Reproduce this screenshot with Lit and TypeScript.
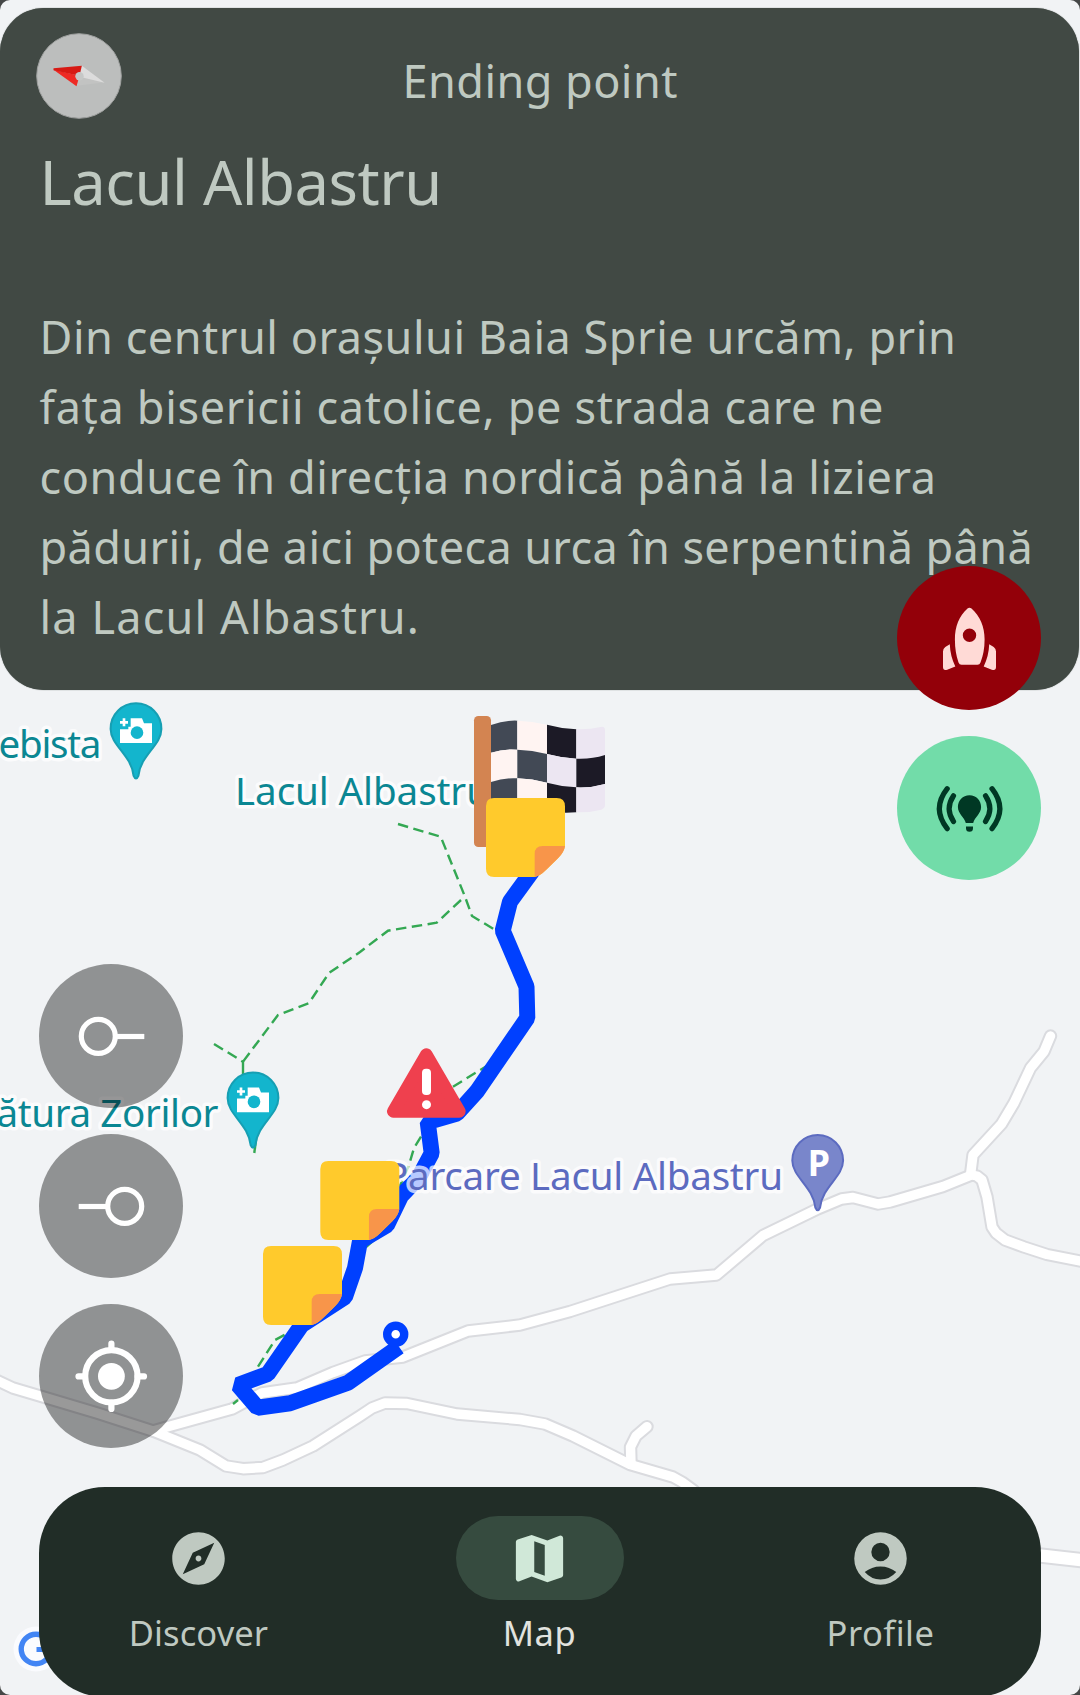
import { LitElement, html, svg, css } from "lit";
import { customElement } from "lit/decorators.js";

type Point = [number, number];
const line = (pts: Point[]) => "M" + pts.map((p) => p.join(" ")).join("L");

const ROADS: Point[][] = [
  [[153, 1431], [167, 1427], [232, 1409], [262, 1393], [297, 1388], [333, 1372.5], [365, 1361], [403, 1357], [468, 1331], [520, 1325], [570, 1311.5], [670, 1279], [716.5, 1275], [763, 1235.5], [817.5, 1209], [841.5, 1199], [853, 1197.5], [878, 1204], [890, 1202], [943, 1186.5], [971.5, 1175], [977, 1176], [982, 1180], [987, 1197], [992, 1227], [996, 1233], [1005, 1240], [1024, 1247], [1047, 1254.5], [1090, 1263]],
  [[-6, 1379], [13, 1388], [40, 1396], [97, 1413], [153, 1431], [200, 1450], [226, 1466], [243, 1468.7], [263, 1467.5], [283, 1460], [313, 1446], [360, 1416], [372, 1408], [385, 1403], [407, 1403.5], [457, 1414], [520, 1419.5], [545, 1424], [573, 1436], [630, 1464.5], [673, 1477], [682, 1482], [693, 1490], [708, 1504]],
  [[1050.5, 1036], [1044, 1051.5], [1030.5, 1068], [1014, 1103], [1001.5, 1124], [973, 1155], [970.5, 1175]],
  [[647, 1426.7], [636, 1436], [630.5, 1447], [631, 1464]],
];

const TRAILS: Point[][] = [
  [[398, 824], [440.7, 836.7], [465, 896.7], [472, 916], [497, 931]],
  [[461, 900], [436.7, 922.7], [388, 930.7], [360, 952], [329, 973], [309, 1003], [278, 1015], [243, 1061.7]],
  [[214, 1044], [243, 1061.7]],
  [[453, 1086.7], [490, 1064]],
  [[421, 1136.7], [414, 1148], [409, 1165], [400, 1186]],
  [[258, 1366.7], [275, 1340], [288, 1333]],
  [[233, 1404], [238, 1400]],
  [[366, 1247], [374, 1240]],
];

const STUBS: Point[][] = [
  [[243, 1061], [243, 1077]],
  [[257, 1132], [254.3, 1153]],
];

const ROUTE: Point[] = [
  [536, 866], [510, 901.7], [502.7, 930.7], [526.5, 986.7], [527.3, 1018], [476.7, 1091.7], [457, 1113.5], [427.7, 1122], [431.7, 1153.3], [419, 1177], [401, 1196], [387, 1225], [360, 1241], [355, 1268], [345, 1297], [301.7, 1325], [267.7, 1374], [238, 1385], [257.5, 1407.7], [290, 1403.3], [348, 1382.7], [399, 1346.7],
];

const photoPin = (x: number, y: number) => svg`
  <g transform="translate(${x} ${y})">
    <path class="pin teal" d="M0 0C14.2 0 25.4 11.3 25.4 25.6C25.4 42 4.6 51.5 2.4 72.5Q0 78 -2.4 72.5C-4.6 51.5 -25.4 42 -25.4 25.6C-25.4 11.3 -14.2 0 0 0Z"/>
    <g transform="translate(-136 -13) scale(.33333)">
      <path fill="#fff" d="M392 84H426L432 99H456V158H360V117H385V109H392ZM368 84H376V92H384V100H376V108H368V100H360V92H368Z"/>
      <circle cx="411" cy="127" r="19" fill="#13b5cd"/>
    </g>
  </g>`;

const note = (x: number, y: number) => svg`
  <g transform="translate(${x} ${y}) scale(.33333)">
    <path fill="#ffca2c" d="M24 0H212Q237 0 237 25V145Q234 163 216 181L180 216Q163 233 147 237H24Q0 237 0 212V24Q0 0 24 0Z"/>
    <path fill="#f8954a" d="M146 237V168Q146 144 170 144H237Q235 162 216 181L180 216Q163 233 146 237Z"/>
  </g>`;

const XS = [393, 472, 561, 649, 735];
const ROWS = [
  [105, 92, 104, 118, 110],
  [188, 179, 192, 206, 195],
  [276, 265, 278, 292, 282],
  [363, 351, 364, 367, 358],
];
const MIDS = [-8, -5, 5, 8];

const flagCell = (r: number, c: number) => {
  const a = ROWS[r];
  const b = ROWS[r + 1];
  const mx = (XS[c] + XS[c + 1]) / 2;
  const ta = (a[c] + a[c + 1]) / 2 + MIDS[c];
  const tb = (b[c] + b[c + 1]) / 2 + MIDS[c];
  const dark = (r + c) % 2 === 0;
  const fill = c < 2 ? (dark ? "#424955" : "#fff4f2") : dark ? "#1c1a26" : "#ece6f2";
  let d = `M${XS[c]} ${a[c]}Q${mx} ${ta} ${XS[c + 1]} ${a[c + 1]}V${b[c + 1]}Q${mx} ${tb} ${XS[c]} ${b[c]}Z`;
  if (c === 3 && r === 0) d = `M649 118Q690 119 722 111Q735 108 735 121V195Q692 210 649 206Z`;
  if (c === 3 && r === 2) d = `M649 292Q692 294 735 282V346Q735 355 724 359Q690 368 649 367Z`;
  return svg`<path d=${d} fill=${fill}/>`;
};

@customElement("trail-map")
class TrailMap extends LitElement {
  static styles = css`
    :host { display: block; }
    .canvas { display: block; width: 1080px; height: 1695px; }
    path { fill-rule: evenodd; }
    .casing { fill: none; stroke: #dadbdf; stroke-width: 13.4; stroke-linejoin: round; stroke-linecap: round; }
    .road { fill: none; stroke: #fff; stroke-width: 9.4; stroke-linejoin: round; stroke-linecap: round; }
    .wide { stroke-width: 16.4; }
    .road.wide { stroke-width: 12.4; }
    .trail { fill: none; stroke: #34a853; stroke-width: 2.4; stroke-dasharray: 10.5 5.5; }
    .stub { stroke-dasharray: none; }
    .route { fill: none; stroke: #0040ff; stroke-width: 16; stroke-linejoin: bevel; }
    .pin { stroke-width: 2; }
    .teal { fill: #13b5cd; stroke: #169fb3; }
    .indigo { fill: #7986cb; stroke: #5c6bc0; }
    .label {
      font: 38.6px "Noto Sans", "Open Sans", sans-serif;
      paint-order: stroke;
      stroke: rgba(255, 255, 255, 0.72);
      stroke-width: 7px;
      stroke-linejoin: round;
    }
    .poi { fill: #0b8793; }
    .parking { fill: #5c6bc0; }
    .p { font: 700 36px "Open Sans", "Noto Sans", sans-serif; fill: #fff; }
  `;

  render() {
    return html`
      <svg class="canvas" viewBox="0 0 1080 1695">
        <rect width="1080" height="1695" fill="#f1f3f5" />
        ${ROADS.map((r) => svg`<path class="casing" d=${line(r)}/>`)}
        <path class="casing wide" d="M1000 1551L1090 1561" />
        ${ROADS.map((r) => svg`<path class="road" d=${line(r)}/>`)}
        <path class="road wide" d="M1000 1551L1090 1561" />
        ${TRAILS.map((t) => svg`<path class="trail" d=${line(t)}/>`)}
        ${STUBS.map((t) => svg`<path class="trail stub" d=${line(t)}/>`)}
        <path class="route" d=${line(ROUTE)} />
        <circle cx="395.7" cy="1334.3" r="8.5" fill="#fff" stroke="#0040ff" stroke-width="8.4" />
        <text class="label poi" x="-1.5" y="758" textLength="103">ebista</text>
        <text class="label poi" x="235" y="805.3" textLength="255">Lacul Albastru</text>
        <text class="label poi" x="-3.500" y="1126.7" textLength="222">ătura Zorilor</text>
        <text class="label parking" x="385" y="1189.6" textLength="398">Parcare Lacul Albastru</text>
        ${photoPin(136, 703.3)} ${photoPin(253, 1072.5)}
        <g transform="translate(817.7 1135)">
          <path class="pin indigo" d="M0 0C14.2 0 25.4 11.3 25.4 25.6C25.4 42 4.6 51.5 2.4 72.5Q0 78 -2.4 72.5C-4.6 51.5 -25.4 42 -25.4 25.6C-25.4 11.3 -14.2 0 0 0Z" />
          <text class="p" x="-10.3" y="41">P</text>
        </g>
        <g transform="translate(360 690) scale(.33333)">
          <rect x="342" y="78" width="51" height="393" rx="13" fill="#d38451" />
          ${[0, 1, 2].map((r) => [0, 1, 2, 3].map((c) => flagCell(r, c)))}
          <path d="M199 1094L100 1264H298Z" fill="#ef404e" stroke="#ef404e" stroke-width="38" stroke-linejoin="round" />
          <rect x="186" y="1136" width="27" height="79" rx="12" fill="#fff" />
          <circle cx="199.5" cy="1244" r="13.5" fill="#fff" />
        </g>
        ${note(486, 798)} ${note(320.3, 1161)} ${note(263, 1246)}
        <circle cx="36" cy="1649" r="22.5" fill="#fafbfe" />
        <circle cx="36" cy="1649" r="14.8" fill="none" stroke="#4285f4" stroke-width="5.4" />
        <path d="M36.5 1649.5H54" stroke="#4285f4" stroke-width="5" />
      </svg>
    `;
  }
}

@customElement("info-card")
class InfoCard extends LitElement {
  static styles = css`
    :host { display: block; }
    .card {
      box-sizing: border-box;
      width: 1079px;
      height: 682px;
      border-radius: 44px;
      background: #414944;
      color: #bfc9c1;
      padding: 0 39px;
      display: flex;
      flex-direction: column;
      font-family: "Noto Sans", "Open Sans", sans-serif;
      box-shadow: 0 0 1px #414944;
    }
    .head { display: grid; grid-template-columns: 86px 1fr 86px; align-items: center; height: 136px; margin-left: -3.5px; margin-right: -5px; }
    .compass { display: block; width: 86px; height: 86px; }
    .status { text-align: center; font-size: 45px; line-height: 60px; letter-spacing: 0.45px; padding-top: 9px; }
    .title { margin: -5px 0 0 0.5px; font-weight: 400; font-size: 61.5px; line-height: 84px; letter-spacing: -0.45px; white-space: nowrap; }
    .body { margin: 78.5px 0 0 0.5px; font-size: 45px; line-height: 70px; white-space: nowrap; }
    .line { display: block; }
    .l1 { letter-spacing: 0.54px; }
    .l2 { letter-spacing: 0.68px; }
    .l3 { letter-spacing: 0.59px; }
    .l4 { letter-spacing: 0.38px; }
    .l5 { letter-spacing: 1.16px; }
  `;

  render() {
    return html`
      <section class="card">
        <div class="head">
          <svg class="compass" viewBox="35.5 33.3 86 86">
            <circle cx="78.5" cy="76.3" r="42.3" fill="#bcbebd" stroke="#9fa1a0" stroke-width="1" />
            <path d="M81.3 66L104 82.5L76.5 86L79 76Z" fill="#c2c3c2" />
            <path d="M81.3 66L104 83L79 77Z" fill="#dcdcdc" />
            <path d="M53 70L76 86.5L79 76Z" fill="#ee2a24" />
            <path d="M53 68.5L81.3 66L79 76L53 70.5Z" fill="#d71a14" />
            <circle cx="79" cy="76.5" r="4.2" fill="#c6c8c7" />
          </svg>
          <div class="status">Ending point</div>
        </div>
        <h1 class="title">Lacul Albastru</h1>
        <p class="body">
          <span class="line l1">Din centrul orașului Baia Sprie urcăm, prin</span>
          <span class="line l2">fața bisericii catolice, pe strada care ne</span>
          <span class="line l3">conduce în direcția nordică până la liziera</span>
          <span class="line l4">pădurii, de aici poteca urca în serpentină până</span>
          <span class="line l5">la Lacul Albastru.</span>
        </p>
      </section>
    `;
  }
}

@customElement("bottom-nav")
class BottomNav extends LitElement {
  static styles = css`
    :host { display: block; }
    .bar {
      box-sizing: border-box;
      height: 210px;
      border-radius: 66px;
      background: #212d27;
      padding: 29px 12.5px 0 11.5px;
      display: grid;
      grid-template-columns: 296px 1fr 296px;
      font-family: "Noto Sans", "Open Sans", sans-serif;
    }
    .item { display: flex; flex-direction: column; align-items: center; color: #bfc9c1; }
    .pill { width: 168px; height: 84px; border-radius: 42px; display: flex; align-items: center; justify-content: center; }
    .icon { width: 63px; height: 63px; fill: currentColor; fill-rule: evenodd; }
    .text { font-size: 34.5px; line-height: 46px; margin-top: 10px; }
    .discover { letter-spacing: 0.1px; }
    .map { letter-spacing: 0.5px; color: #e1e3df; }
    .profile { letter-spacing: 0.5px; }
    .active { background: #364b3f; color: #d0e8d8; }
  `;

  render() {
    return html`
      <nav class="bar">
        <div class="item">
          <div class="pill">
            <svg class="icon" viewBox="0 0 24 24"><path d="M12 10.9c-.61 0-1.1.49-1.1 1.1s.49 1.1 1.1 1.1c.61 0 1.1-.49 1.1-1.1s-.49-1.1-1.1-1.1zM12 2C6.48 2 2 6.48 2 12s4.48 10 10 10 10-4.48 10-10S17.52 2 12 2zm2.19 12.19L6 18l3.81-8.19L18 6l-3.81 8.19z" /></svg>
          </div>
          <span class="text discover">Discover</span>
        </div>
        <div class="item">
          <div class="pill active">
            <svg class="icon" viewBox="0 0 24 24"><path d="M15 21l-6-2.1-4.65 1.8q-.5.2-.925-.113T3 19.75v-14q0-.325.188-.575T3.7 4.8L9 3l6 2.1 4.65-1.8q.5-.2.925.113T21 4.25v14q0 .325-.188.575t-.512.375L15 21zm-1-2.45V6.85l-4-1.4v11.7l4 1.4z" /></svg>
          </div>
          <span class="text map">Map</span>
        </div>
        <div class="item">
          <div class="pill">
            <svg class="icon" viewBox="0 0 24 24"><path d="M12 2a10 10 0 1 0 0 20a10 10 0 1 0 0-20zM12 6a3.5 3.5 0 1 1 0 7a3.5 3.5 0 1 1 0-7zM6 17.15Q8.6 15 12 15T18 17.15Q15.5 20 12 20T6 17.15z" /></svg>
          </div>
          <span class="text profile">Profile</span>
        </div>
      </nav>
    `;
  }
}

@customElement("app-root")
class AppRoot extends LitElement {
  static styles = css`
    :host { display: block; }
    .screen { position: relative; width: 1080px; height: 1695px; overflow: hidden; background: #454747; display: grid; }
    .map { grid-area: 1 / 1; border-radius: 10px; overflow: hidden; }
    .overlay { grid-area: 1 / 1; height: 1695px; display: flex; flex-direction: column; justify-content: space-between; padding-top: 8px; box-sizing: border-box; position: relative; }
    .nav { margin: 0 39px -2px; }
    .fabs { position: absolute; display: flex; flex-direction: column; gap: 26px; }
    .left { left: 39px; top: 964px; }
    .right { left: 897px; top: 566px; }
    .fab { width: 144px; height: 144px; border-radius: 50%; }
    .glyph { display: block; width: 144px; height: 144px; }
    .scrim { background: rgba(0, 0, 0, 0.4); }
    .danger { background: #930009; }
    .live { background: #72dca9; }
    .stroke { fill: none; stroke: #fff; stroke-width: 5.2; }
    .target { stroke-width: 6.2; }
    .arcs { fill: none; stroke: #003824; stroke-width: 5.2; stroke-linecap: round; }
  `;

  render() {
    return html`
      <main class="screen">
        <trail-map class="map"></trail-map>
        <div class="overlay">
          <info-card></info-card>
          <bottom-nav class="nav"></bottom-nav>
          <div class="fabs left">
            <div class="fab scrim">
              <svg class="glyph" viewBox="0 0 144 144"><g class="stroke"><circle cx="59.3" cy="72.3" r="17" /><path d="M77 72.5H105.3" /></g></svg>
            </div>
            <div class="fab scrim">
              <svg class="glyph" viewBox="0 0 144 144"><g class="stroke"><circle cx="85.7" cy="72.3" r="17" /><path d="M39.7 72.5H68" /></g></svg>
            </div>
            <div class="fab scrim">
              <svg class="glyph" viewBox="0 0 144 144">
                <g class="stroke target"><circle cx="72.4" cy="72.3" r="26.2" /><path stroke-linecap="round" d="M72.4 39.5V46M72.4 98.5V105M39.5 72.4H46M98.5 72.4H105" /></g>
                <circle cx="72.4" cy="72.3" r="13.4" fill="#fff" />
              </svg>
            </div>
          </div>
          <div class="fabs right">
            <div class="fab danger">
              <svg class="glyph" viewBox="897 566 144 144">
                <path fill="#ffdad6" fill-rule="evenodd" d="M969.5 607.8Q970.6 607.8 971.5 608.6C980 616 984.6 627 984.6 639.5Q984.6 652 980.5 662.5Q979.7 664.7 977.5 664.7H961.5Q959.3 664.7 958.5 662.5Q954.9 652 954.9 639.5C954.9 627 959 616 967.5 608.6Q968.4 607.8 969.5 607.8ZM969.5 628.6a6.7 6.7 0 1 0 0 13.4a6.7 6.7 0 1 0 0-13.4zM949.8 644.3Q950.2 656 955.3 666.5L947.2 669.7Q943 671 943 667V651.5Q943 648.5 945.3 647ZM989.2 644.3Q988.8 656 983.7 666.5L991.8 669.7Q996 671 996 667V651.5Q996 648.5 993.7 647Z" />
              </svg>
            </div>
            <div class="fab live">
              <svg class="glyph" viewBox="897 736 144 144">
                <path class="arcs" d="M947.2 788.7Q931.5 808.7 947.2 828.7M953.5 795.8Q944.8 808.7 953.5 821.5M992 788.7Q1007.7 808.7 992 828.7M985.5 795.8Q994.2 808.7 985.5 821.5" />
                <path fill="#003824" d="M969.5 795.2C976.4 795.2 981.1 800.5 981.1 807C981.1 814 974.5 817 973.2 823H965.8C964.5 817 957.9 814 957.9 807C957.9 800.5 962.6 795.2 969.5 795.2ZM966 826.5H973V828.3a3.5 3.5 0 0 1-7 0Z" />
              </svg>
            </div>
          </div>
        </div>
      </main>
    `;
  }
}
